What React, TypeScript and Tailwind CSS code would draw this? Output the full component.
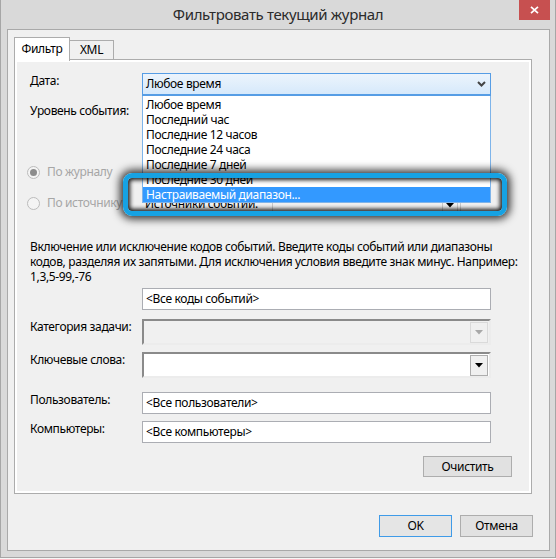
import React from "react";

type Arrow = { color: string };

function DownArrow({ color }: Arrow) {
  return (
    <svg width="8" height="5" viewBox="0 0 8 5">
      <path d="M0 0h8L4 4.5z" fill={color} />
    </svg>
  );
}

function Chevron() {
  return (
    <svg width="9" height="6" viewBox="0 0 9 6">
      <polyline points="1,1 4.5,4.5 8,1" fill="none" stroke="#444" strokeWidth="2" />
    </svg>
  );
}

function Radio({ checked, label }: { checked?: boolean; label: string }) {
  return (
    <div className="flex w-[125px] shrink-0 items-center pl-[10px]">
      <span className="flex h-[13px] w-[13px] items-center justify-center rounded-full border border-[#bcbcbc] bg-[#f4f4f4]">
        {checked && <span className="h-[7px] w-[7px] rounded-full bg-[#8c8c8c]" />}
      </span>
      <span className="ml-[7px] whitespace-nowrap text-[#a6a6a6]">{label}</span>
    </div>
  );
}

function SunkenCombo({ disabled }: { disabled?: boolean }) {
  return (
    <div
      className={
        "flex h-[26px] w-[349px] items-center justify-end border-2 border-t-[#8a8a8a] border-l-[#8a8a8a] border-r-[#ececec] border-b-[#ececec] pr-[1px] " +
        (disabled ? "bg-[#f0f0f0]" : "bg-white")
      }
    >
      <div
        className={
          "flex h-[21px] w-[18px] items-center justify-center border " +
          (disabled ? "border-[#dadada] bg-[#f0f0f0]" : "border-[#adadad] bg-[#f0f0f0]")
        }
      >
        <DownArrow color={disabled ? "#a8a8a8" : "#000"} />
      </div>
    </div>
  );
}

function TextBox({ value }: { value: string }) {
  return (
    <div className="flex h-[22px] w-[349px] items-center border border-[#abadb3] bg-white pl-[3px] whitespace-nowrap">
      {value}
    </div>
  );
}

function Row({ label, children, className }: { label: string; children?: React.ReactNode; className: string }) {
  return (
    <div className={"flex items-start pl-[13px] " + className}>
      <div className="w-[112px] shrink-0 whitespace-nowrap leading-[15px]">{label}</div>
      {children}
    </div>
  );
}

const dates = [
  "Любое время",
  "Последний час",
  "Последние 12 часов",
  "Последние 24 часа",
  "Последние 7 дней",
  "Последние 30 дней",
  "Настраиваемый диапазон...",
];

export default function App() {
  return (
    <div className="relative h-[559px] w-[556px] bg-[#f6f6f6] font-['Segoe_UI','Noto_Sans',sans-serif] text-[12px] tracking-[-0.35px] text-black">
      <div className="flex h-[558px] w-[556px] flex-col border border-t-0 border-[#a6a6a6] bg-[#d9d9d9]">
        {/* title bar */}
        <div className="relative flex h-[29px] shrink-0 items-center justify-center text-[15px] text-[#2b2b2b]">
          Фильтровать текущий журнал
          <div className="absolute right-[5px] top-0 flex h-[20px] w-[31px] items-center justify-center bg-[#c75050]">
            <svg width="9" height="8" viewBox="0 0 9 8">
              <path d="M1 0.8l7 6.4M8 0.8L1 7.2" stroke="#fff" strokeWidth="1.7" />
            </svg>
          </div>
        </div>

        {/* client area */}
        <div className="ml-[6px] mr-[5px] flex h-[522px] flex-col border border-[#a9a9a9] bg-[#f0f0f0]">
          <div className="relative z-10 ml-[6px] mt-[7px] flex h-[22px] items-end">
            <div className="-mb-[2px] flex h-[24px] w-[56px] items-center justify-center border border-b-0 border-[#acacac] bg-white pb-[2px]">
              Фильтр
            </div>
            <div className="flex h-[19px] w-[44px] items-center justify-center border border-b-0 border-l-0 border-[#acacac] bg-[#f0f0f0]">
              XML
            </div>
          </div>

          <div className="ml-[6px] h-[435px] w-[518px] border border-[#acacac] bg-white p-[2px]">
            <div className="h-full bg-[#f0f0f0]">
              {/* date */}
              <Row label="Дата:" className="pt-[11px]">
                <div className="flex h-[23px] w-[349px] items-center justify-between border border-[#569de5] border-b-2 bg-gradient-to-b from-[#ecf4fc] to-[#d6e9fb] pl-[3px] pr-[4px]">
                  <span className="whitespace-nowrap">Любое время</span>
                  <Chevron />
                </div>
              </Row>

              {/* level (its check boxes sit under the open list) */}
              <Row label="Уровень события:" className="mt-[7px] h-[58px]" />

              {/* by log / by source */}
              <div className="flex h-[22px] items-center">
                <Radio checked label="По журналу" />
              </div>
              <div className="mt-[9px] flex h-[22px] items-center">
                <Radio label="По источнику" />
                <div className="w-[130px] shrink-0 pl-[3px] pt-[1px] whitespace-nowrap">Источники событий:</div>
                <div className="flex h-[22px] w-[189px] items-center justify-end border border-[#c8c8c8] bg-[#f0f0f0] pr-[2px]">
                  <div className="flex h-[18px] w-[16px] items-end justify-center border border-[#c8c8c8] pb-[3px]">
                    <DownArrow color="#000" />
                  </div>
                </div>
              </div>

              {/* description */}
              <div className="mt-[25px] pl-[13px] leading-[15px] whitespace-nowrap">
                Включение или исключение кодов событий. Введите коды событий или диапазоны
                <br />
                кодов, разделяя их запятыми. Для исключения условия введите знак минус. Например:
                <br />
                1,3,5-99,-76
              </div>

              <div className="mt-[4px] pl-[125px]">
                <TextBox value="<Все коды событий>" />
              </div>

              <Row label="Категория задачи:" className="mt-[9px]">
                <SunkenCombo disabled />
              </Row>
              <Row label="Ключевые слова:" className="mt-[7px]">
                <SunkenCombo />
              </Row>
              <Row label="Пользователь:" className="mt-[14px]">
                <TextBox value="<Все пользователи>" />
              </Row>
              <Row label="Компьютеры:" className="mt-[7px]">
                <TextBox value="<Все компьютеры>" />
              </Row>

              <div className="mt-[13px] flex justify-end pr-[17px]">
                <button className="h-[21px] w-[89px] border border-[#adadad] bg-[#e1e1e1]">Очистить</button>
              </div>
            </div>
          </div>

          <div className="mr-[16px] mt-[21px] flex justify-end gap-[8px]">
            <button className="h-[22px] w-[73px] border border-[#3f9be8] bg-[#e5e5e5]">OK</button>
            <button className="h-[22px] w-[73px] border border-[#adadad] bg-[#e1e1e1]">Отмена</button>
          </div>
        </div>
      </div>

      {/* open dropdown list */}
      <div className="absolute left-[142px] top-[96px] w-[349px] border border-t-0 border-[#7eb4ea] bg-white pt-[1px]">
        {dates.map((d, i) => (
          <div
            key={d}
            className={
              "h-[15px] whitespace-nowrap pl-[3px] leading-[15px] " +
              (i === dates.length - 1 ? "bg-[#3399ff] text-white" : "")
            }
          >
            {d}
          </div>
        ))}
      </div>

      {/* highlight frame */}
      <div className="absolute left-[123px] top-[173px] h-[43px] w-[384px] rounded-[9px] border-[5px] border-[#16a2e3] shadow-[0_0_8px_3px_rgba(0,0,0,0.8),inset_0_0_4px_2px_rgba(0,0,0,0.9)]" />
    </div>
  );
}
